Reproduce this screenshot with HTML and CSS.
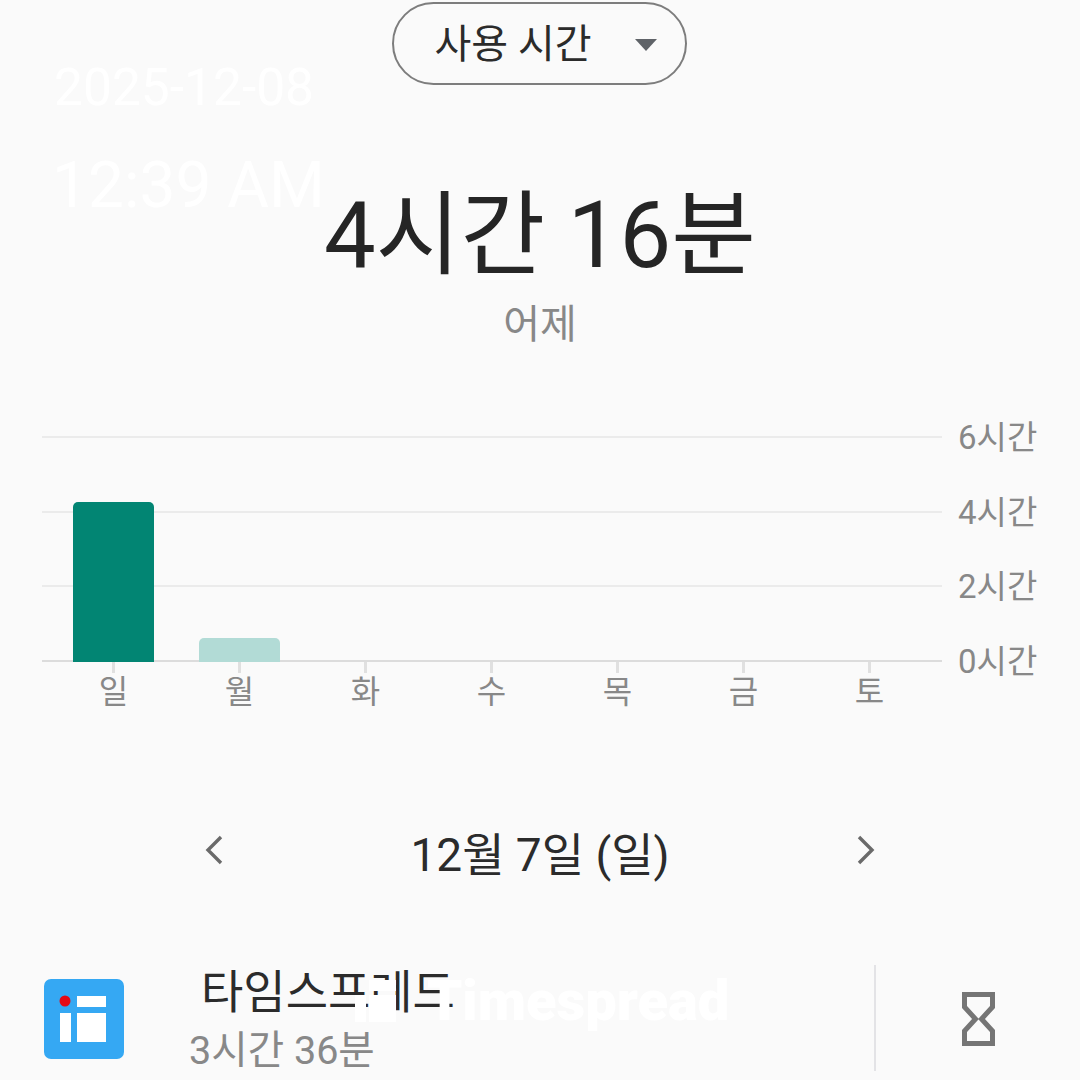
FILE: index.html
```html
<!DOCTYPE html>
<html lang="ko">
<head>
<meta charset="utf-8">
<title>사용 시간</title>
<link rel="stylesheet" href="styles.css">
</head>
<body>
<main class="page">
  <div class="pill-row">
    <button class="pill"><span>사용 시간</span><i class="caret"></i></button>
  </div>
  <h1 class="total">4시간 16분</h1>
  <p class="when">어제</p>

  <section class="chart">
    <div class="plot-col">
      <div class="plot">
        <div class="grid"><i class="line"></i><i class="line"></i><i class="line"></i><i class="line base"></i></div>
        <div class="bars">
          <div class="slot"><div class="bar dark"></div></div>
          <div class="slot"><div class="bar light"></div></div>
          <div class="slot"></div><div class="slot"></div><div class="slot"></div><div class="slot"></div><div class="slot"></div>
        </div>
      </div>
      <div class="days">
        <div class="day">일</div><div class="day">월</div><div class="day">화</div><div class="day">수</div><div class="day">목</div><div class="day">금</div><div class="day">토</div>
      </div>
    </div>
    <div class="axis"><span>6시간</span><span>4시간</span><span>2시간</span><span>0시간</span></div>
  </section>

  <nav class="datenav">
    <svg class="chev" viewBox="0 0 18 30"><path d="M16 2 L3 15 L16 28"/></svg>
    <span class="date">12월 7일 (일)</span>
    <svg class="chev" viewBox="0 0 18 30"><path d="M2 2 L15 15 L2 28"/></svg>
  </nav>

  <section class="app">
    <svg class="appicon" viewBox="0 0 80 80">
      <rect width="80" height="80" rx="7" fill="#35a8f3"/>
      <rect x="33" y="17" width="29" height="11" fill="#fff"/>
      <rect x="33" y="34" width="29" height="29" fill="#fff"/>
      <rect x="16" y="34" width="11" height="29" fill="#fff"/>
      <circle cx="21" cy="22" r="5.5" fill="#e50914"/>
    </svg>
    <div class="appinfo">
      <div class="appname">타임스프레드</div>
      <div class="apptime">3시간 36분</div>
    </div>
    <div class="timer">
      <svg class="glass" viewBox="0 0 33 54"><path d="M2.5 2.5 H30.5 V15 L19.5 27 L30.5 39 V51.5 H2.5 V39 L13.5 27 L2.5 15 Z"/></svg>
    </div>
  </section>
</main>
<div class="mark mark-date">2025-12-08</div>
<div class="mark mark-time">12:39 AM</div>
<svg class="brand-icon" viewBox="0 0 41 42"><rect x="14" y="0" width="27" height="11" fill="#fff"/><rect x="14" y="15" width="27" height="27" fill="#fff"/><rect x="0" y="15" width="11" height="27" fill="#fff"/></svg>
<div class="mark mark-brand">Timespread</div>
</body>
</html>
```

FILE: styles.css
```css
* { box-sizing: border-box; }
html, body { margin: 0; padding: 0; }
body {
  width: 1080px; height: 1080px; overflow: hidden; position: relative;
  background: #fafafa; color: #252525;
  font-family: Roboto, "Noto Sans CJK KR", sans-serif;
}
.page { display: flex; flex-direction: column; height: 1080px; }
.pill-row { display: flex; justify-content: center; padding: 2px 2px 0 0; }
.pill {
  width: 295px; height: 83px; border: 2px solid #7d7d7d; border-radius: 42px; background: transparent;
  display: flex; align-items: center; padding: 0 28px 5px 41px;
  font: inherit; font-size: 40px; color: #2b2b2b; justify-content: space-between;
}
.caret { width: 0; height: 0; border-left: 11.5px solid transparent; border-right: 11.5px solid transparent; border-top: 12px solid #5f6368; margin-top: 7px; }
.total { margin: 96px 0 0; text-align: center; font-size: 92px; font-weight: 400; line-height: 110px; }
.when { margin: 9px 0 0; text-align: center; font-size: 40px; line-height: 50px; color: #888; }

.chart { display: flex; margin: 86px 0 0 42px; }
.plot-col { width: 900px; }
.plot { position: relative; height: 226px; }
.grid { height: 100%; display: flex; flex-direction: column; justify-content: space-between; }
.line { display: block; height: 2px; background: #ebebeb; }
.line.base { background: #dcdcdc; }
.bars { position: absolute; inset: 0 0 0 31px; display: flex; gap: 45px; align-items: flex-end; }
.slot { width: 81px; }
.bar { border-radius: 5px 5px 0 0; }
.dark { height: 160px; background: #028573; }
.light { height: 24px; background: #b2dbd6; }
.days { display: flex; padding-left: 31px; gap: 45px; }
.day {
  width: 81px; text-align: center; font-size: 32px; line-height: 40px; color: #888;
  position: relative; padding-top: 10px;
}
.day::before { content: ""; position: absolute; left: 39px; top: 0; width: 3px; height: 11px; background: #e0e0e0; }
.axis {
  margin-left: 16px; height: 226px; position: relative; top: 1px;
  display: flex; flex-direction: column; justify-content: space-between;
  font-size: 33px; color: #888;
}
.axis span { display: block; height: 2px; line-height: 2px; white-space: nowrap; }

.datenav { margin-top: 110px; display: flex; align-items: center; justify-content: center; height: 60px; }
.date { width: 634px; text-align: center; font-size: 46px; color: #2b2b2b; margin-top: -2px; }
.chev { width: 18px; height: 30px; fill: none; stroke: #6a6a6a; stroke-width: 3.4; margin-top: -4px; }

.app { margin-top: 83px; display: flex; align-items: flex-start; padding-left: 44px; height: 116px; }
.appicon { width: 80px; height: 80px; margin-top: 14px; flex: none; }
.appinfo { width: 750px; padding-left: 65px; }
.appname { font-size: 46px; line-height: 54px; color: #2b2b2b; padding-left: 12px; }
.apptime { font-size: 39.6px; line-height: 50px; color: #888; margin-top: 7px; }
.timer { height: 106px; width: 206px; border-left: 2px solid #e3e3e6; display: flex; justify-content: center; align-items: flex-start; padding: 27px 0 0; }
.glass { width: 33px; height: 54px; fill: none; stroke: #757575; stroke-width: 5; }

.mark { position: absolute; color: #fff; white-space: nowrap; }
.mark-date { left: 54px; top: 58px; font-size: 51.5px; line-height: 60px; }
.mark-time { left: 52px; top: 150px; font-size: 64px; line-height: 72px; }
.mark-brand { left: 427px; top: 968px; font-size: 56px; line-height: 66px; font-weight: 900; }
.brand-icon { position: absolute; left: 355px; top: 980px; width: 41px; height: 42px; }
```
